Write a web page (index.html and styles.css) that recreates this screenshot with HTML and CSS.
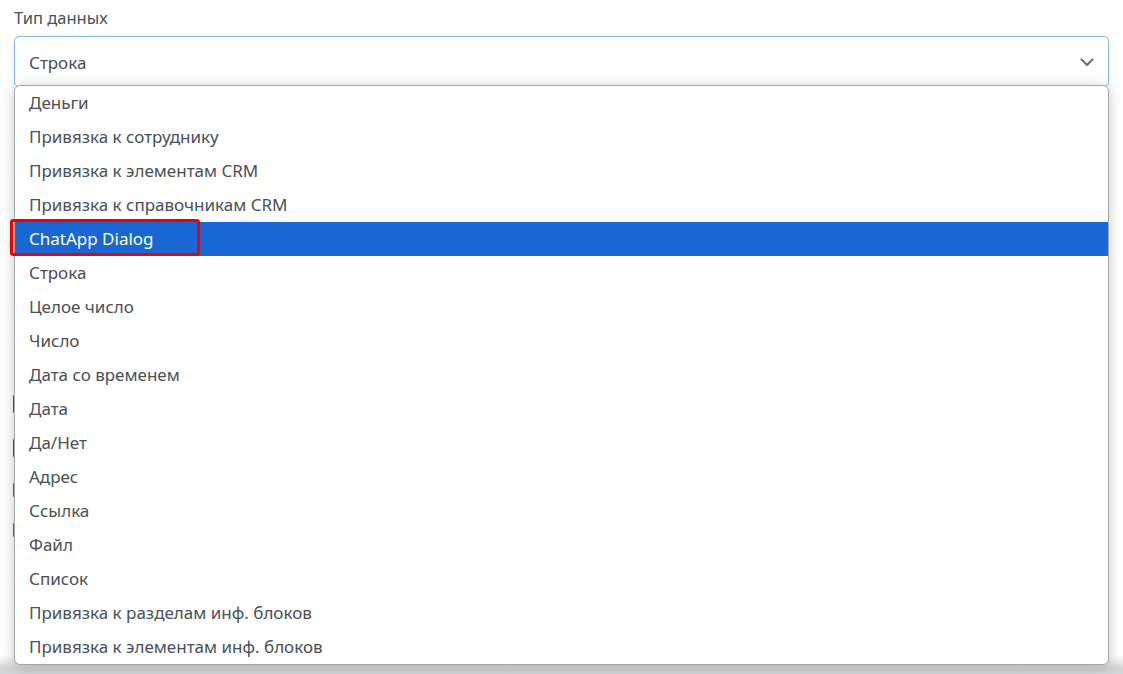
FILE: index.html
```html
<!DOCTYPE html>
<html lang="ru">
<head>
<meta charset="utf-8">
<link rel="stylesheet" href="styles.css">
</head>
<body>
<div class="page">
  <div class="field">
    <div class="label">Тип данных</div>
    <div class="select">
      <span class="value">Строка</span>
      <svg class="chev" width="14" height="9" viewBox="0 0 14 9"><path d="M1.5 1.5 L7 7 L12.5 1.5" fill="none" stroke="#6c757d" stroke-width="2.2" stroke-linecap="round" stroke-linejoin="round"/></svg>
    </div>
    <ul class="menu">
      <li>Деньги</li>
      <li>Привязка к сотруднику</li>
      <li>Привязка к элементам CRM</li>
      <li>Привязка к справочникам CRM</li>
      <li class="active"><span class="mark">ChatApp Dialog</span></li>
      <li>Строка</li>
      <li>Целое число</li>
      <li>Число</li>
      <li>Дата со временем</li>
      <li>Дата</li>
      <li>Да/Нет</li>
      <li>Адрес</li>
      <li>Ссылка</li>
      <li>Файл</li>
      <li>Список</li>
      <li>Привязка к разделам инф. блоков</li>
      <li>Привязка к элементам инф. блоков</li>
    </ul>
  </div>
  <div class="behind">
    <div class="box"></div>
    <div class="chk gray"></div>
    <div class="chk gray"></div>
    <div class="chk blue"></div>
    <div class="chk blue"></div>
  </div>
</div>
</body>
</html>
```
FILE: styles.css
```css
html, body {
  margin: 0;
  padding: 0;
  background: #ffffff;
  font-family: "Noto Sans", "Open Sans", sans-serif;
  height: 674px;
  overflow: hidden;
}
.page {
  padding: 6px 14px 0 14px;
  position: relative;
  height: 668px;
  background: linear-gradient(to bottom, #ffffff 0, #ffffff 655px, #d3d5d7 668px);
}
.field {
  position: relative;
}
.label {
  font-size: 16.5px;
  color: #495057;
  line-height: 24px;
  height: 24px;
  margin-bottom: 6px;
}
.select {
  height: 48px;
  border: 1px solid #7fb9ee;
  border-radius: 5px;
  display: flex;
  align-items: center;
  justify-content: space-between;
  padding: 1px 14px 0 14px;
  box-sizing: content-box;
  box-shadow: 0 2px 6px rgba(0,0,0,0.08);
}
.value {
  font-size: 17px;
  color: #495057;
}
.menu {
  position: absolute;
  top: 79px;
  left: 0;
  right: 0;
  margin: 0;
  padding: 0;
  list-style: none;
  background: #ffffff;
  border: 1px solid #a8a8a8;
  border-radius: 6px;
  box-shadow: 0 2px 14px rgba(0,0,0,0.22);
  z-index: 2;
}
.menu li {
  height: 34px;
  line-height: 34px;
  padding-left: 14px;
  font-size: 17px;
  color: #495057;
  white-space: nowrap;
}
.menu li.active {
  background: #1967d2;
  color: #ffffff;
  position: relative;
}
.mark {
  display: inline-block;
}
.menu li.active::after {
  content: "";
  position: absolute;
  left: -5px;
  top: -3px;
  width: 184px;
  height: 31px;
  border: 3px solid #f20000;
  border-radius: 3px;
}
.behind {
  display: flex;
  flex-direction: column;
  padding-top: 175px;
}
.box {
  height: 100px;
  border: 1px solid #ced4da;
  border-radius: 4px;
  margin-bottom: 30px;
}
.chk {
  width: 14px;
  height: 16px;
  margin-left: -1px;
  margin-bottom: 24px;
  border-radius: 3px;
}
.chk.gray { border: 2px solid #555; }
.chk.blue { background: #1a73e8; }
```
